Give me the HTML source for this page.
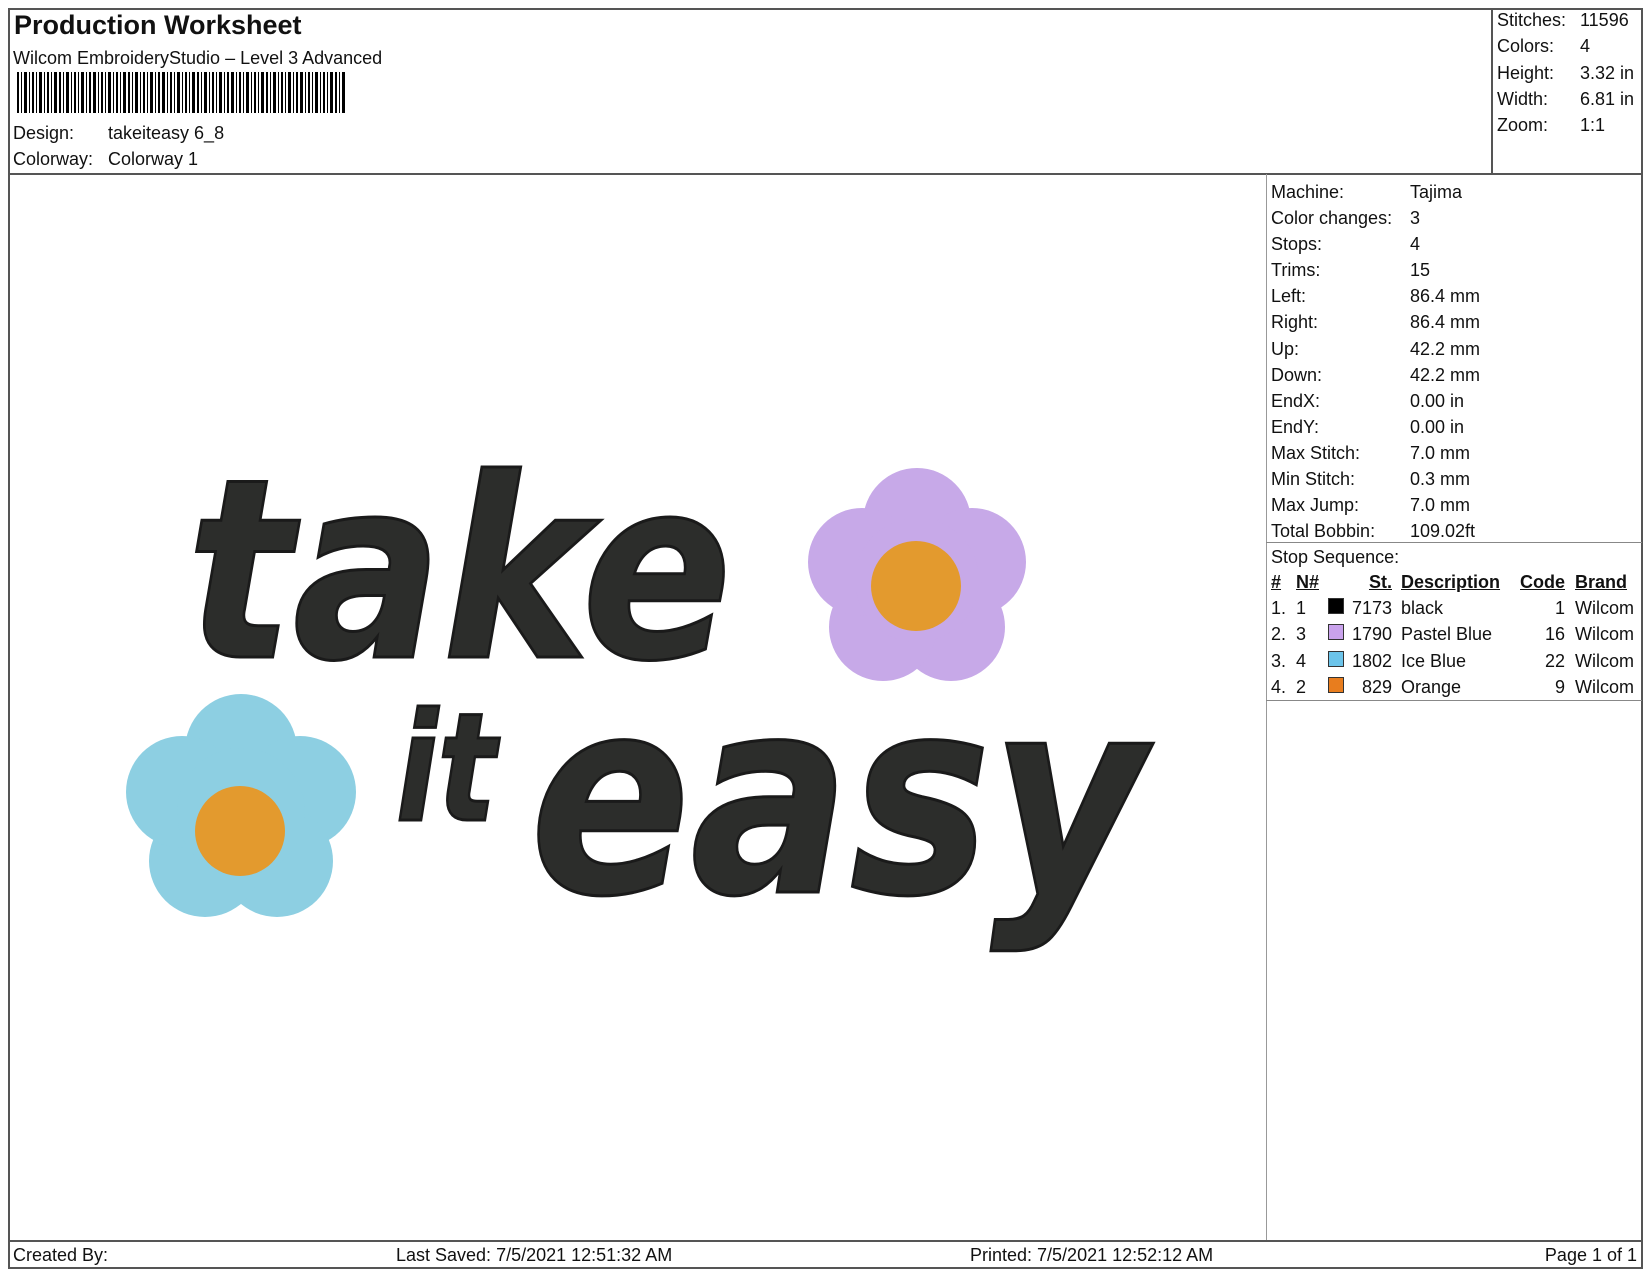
<!DOCTYPE html>
<html><head><meta charset="utf-8"><style>
*{margin:0;padding:0;box-sizing:border-box}
body{width:1650px;height:1270px;background:#fff;position:relative;overflow:hidden;font-family:"Liberation Sans",Arial,sans-serif;color:#111;font-size:18px}
.a{position:absolute;white-space:nowrap;line-height:1}
.ln{position:absolute;background:#555}
.sw{position:absolute;width:16px;height:16px;border:1px solid #333}
u{text-decoration:underline}
</style></head><body>
<div class="ln" style="left:8px;top:8px;width:1635px;height:2px"></div>
<div class="ln" style="left:8px;top:8px;width:2px;height:1261px"></div>
<div class="ln" style="left:1641px;top:8px;width:2px;height:1261px"></div>
<div class="ln" style="left:8px;top:1267px;width:1635px;height:2px"></div>
<div class="ln" style="left:8px;top:173px;width:1635px;height:2px"></div>
<div class="ln" style="left:1491px;top:8px;width:2px;height:166px"></div>
<div class="ln" style="left:1266px;top:174px;width:1px;height:1066px;background:#999"></div>
<div class="ln" style="left:8px;top:1240px;width:1635px;height:2px"></div>
<div class="ln" style="left:1266px;top:542px;width:376px;height:1px;background:#888"></div>
<div class="ln" style="left:1266px;top:700px;width:376px;height:1px;background:#888"></div>

<div class="a" style="left:14px;top:12px;font-size:27px;font-weight:bold">Production Worksheet</div>
<div class="a" style="left:13px;top:49px">Wilcom EmbroideryStudio – Level 3 Advanced</div>
<svg class="a" style="left:17px;top:72px" width="330" height="41">
<g fill="#000">
<rect x="0" y="0" width="2" height="41"/><rect x="4" y="0" width="1" height="41"/><rect x="7" y="0" width="3" height="41"/><rect x="12" y="0" width="1" height="41"/><rect x="15" y="0" width="2" height="41"/><rect x="19" y="0" width="1" height="41"/><rect x="22" y="0" width="3" height="41"/><rect x="27" y="0" width="1" height="41"/><rect x="30" y="0" width="2" height="41"/><rect x="34" y="0" width="1" height="41"/><rect x="37" y="0" width="3" height="41"/><rect x="42" y="0" width="2" height="41"/><rect x="46" y="0" width="1" height="41"/><rect x="49" y="0" width="3" height="41"/><rect x="54" y="0" width="1" height="41"/><rect x="57" y="0" width="2" height="41"/><rect x="61" y="0" width="1" height="41"/><rect x="64" y="0" width="3" height="41"/><rect x="69" y="0" width="1" height="41"/><rect x="72" y="0" width="2" height="41"/><rect x="76" y="0" width="3" height="41"/><rect x="81" y="0" width="1" height="41"/><rect x="84" y="0" width="2" height="41"/><rect x="88" y="0" width="1" height="41"/><rect x="91" y="0" width="3" height="41"/><rect x="96" y="0" width="1" height="41"/><rect x="99" y="0" width="2" height="41"/><rect x="103" y="0" width="1" height="41"/><rect x="106" y="0" width="3" height="41"/><rect x="111" y="0" width="2" height="41"/><rect x="115" y="0" width="1" height="41"/><rect x="118" y="0" width="3" height="41"/><rect x="123" y="0" width="1" height="41"/><rect x="126" y="0" width="2" height="41"/><rect x="130" y="0" width="1" height="41"/><rect x="133" y="0" width="3" height="41"/><rect x="138" y="0" width="1" height="41"/><rect x="141" y="0" width="2" height="41"/><rect x="145" y="0" width="3" height="41"/><rect x="150" y="0" width="1" height="41"/><rect x="153" y="0" width="2" height="41"/><rect x="157" y="0" width="1" height="41"/><rect x="160" y="0" width="3" height="41"/><rect x="165" y="0" width="1" height="41"/><rect x="168" y="0" width="2" height="41"/><rect x="172" y="0" width="1" height="41"/><rect x="175" y="0" width="3" height="41"/><rect x="180" y="0" width="2" height="41"/><rect x="184" y="0" width="1" height="41"/><rect x="187" y="0" width="3" height="41"/><rect x="192" y="0" width="1" height="41"/><rect x="195" y="0" width="2" height="41"/><rect x="199" y="0" width="1" height="41"/><rect x="202" y="0" width="3" height="41"/><rect x="207" y="0" width="1" height="41"/><rect x="210" y="0" width="2" height="41"/><rect x="214" y="0" width="3" height="41"/><rect x="219" y="0" width="1" height="41"/><rect x="222" y="0" width="2" height="41"/><rect x="226" y="0" width="1" height="41"/><rect x="229" y="0" width="3" height="41"/><rect x="234" y="0" width="1" height="41"/><rect x="237" y="0" width="2" height="41"/><rect x="241" y="0" width="1" height="41"/><rect x="244" y="0" width="3" height="41"/><rect x="249" y="0" width="2" height="41"/><rect x="253" y="0" width="1" height="41"/><rect x="256" y="0" width="3" height="41"/><rect x="261" y="0" width="1" height="41"/><rect x="264" y="0" width="2" height="41"/><rect x="268" y="0" width="1" height="41"/><rect x="271" y="0" width="3" height="41"/><rect x="276" y="0" width="1" height="41"/><rect x="279" y="0" width="2" height="41"/><rect x="283" y="0" width="3" height="41"/><rect x="288" y="0" width="1" height="41"/><rect x="291" y="0" width="2" height="41"/><rect x="295" y="0" width="1" height="41"/><rect x="298" y="0" width="3" height="41"/><rect x="303" y="0" width="1" height="41"/><rect x="306" y="0" width="2" height="41"/><rect x="310" y="0" width="1" height="41"/><rect x="313" y="0" width="3" height="41"/><rect x="318" y="0" width="2" height="41"/><rect x="322" y="0" width="1" height="41"/><rect x="325" y="0" width="3" height="41"/>
</g></svg>
<div class="a" style="left:13px;top:124px">Design:</div><div class="a" style="left:108px;top:124px">takeiteasy 6_8</div>
<div class="a" style="left:13px;top:150px">Colorway:</div><div class="a" style="left:108px;top:150px">Colorway 1</div>

<div class="a" style="left:1497px;top:11px">Stitches:</div><div class="a" style="left:1580px;top:11px">11596</div>
<div class="a" style="left:1497px;top:37px">Colors:</div><div class="a" style="left:1580px;top:37px">4</div>
<div class="a" style="left:1497px;top:64px">Height:</div><div class="a" style="left:1580px;top:64px">3.32 in</div>
<div class="a" style="left:1497px;top:90px">Width:</div><div class="a" style="left:1580px;top:90px">6.81 in</div>
<div class="a" style="left:1497px;top:116px">Zoom:</div><div class="a" style="left:1580px;top:116px">1:1</div>

<div style="position:absolute;left:1271px;top:179px;line-height:26.1px">
Machine:<br>Color changes:<br>Stops:<br>Trims:<br>Left:<br>Right:<br>Up:<br>Down:<br>EndX:<br>EndY:<br>Max Stitch:<br>Min Stitch:<br>Max Jump:<br>Total Bobbin:<br>Stop Sequence:</div>
<div style="position:absolute;left:1410px;top:179px;line-height:26.1px">
Tajima<br>3<br>4<br>15<br>86.4 mm<br>86.4 mm<br>42.2 mm<br>42.2 mm<br>0.00 in<br>0.00 in<br>7.0 mm<br>0.3 mm<br>7.0 mm<br>109.02ft</div>

<div class="a" style="left:1271px;top:573px;font-weight:bold"><u>#</u></div>
<div class="a" style="left:1296px;top:573px;font-weight:bold"><u>N#</u></div>
<div class="a" style="left:1362px;top:573px;font-weight:bold;width:30px;text-align:right"><u>St.</u></div>
<div class="a" style="left:1401px;top:573px;font-weight:bold"><u>Description</u></div>
<div class="a" style="left:1515px;top:573px;font-weight:bold;width:50px;text-align:right"><u>Code</u></div>
<div class="a" style="left:1575px;top:573px;font-weight:bold"><u>Brand</u></div>

<div style="position:absolute;left:1271px;top:595px;line-height:26.3px">1.<br>2.<br>3.<br>4.</div>
<div style="position:absolute;left:1296px;top:595px;line-height:26.3px">1<br>3<br>4<br>2</div>
<div class="sw" style="left:1328px;top:598px;background:#000"></div>
<div class="sw" style="left:1328px;top:624px;background:#c9a2ec"></div>
<div class="sw" style="left:1328px;top:651px;background:#6cc4ea"></div>
<div class="sw" style="left:1328px;top:677px;background:#e87d1e"></div>
<div style="position:absolute;left:1340px;width:52px;text-align:right;top:595px;line-height:26.3px">7173<br>1790<br>1802<br>829</div>
<div style="position:absolute;left:1401px;top:595px;line-height:26.3px">black<br>Pastel Blue<br>Ice Blue<br>Orange</div>
<div style="position:absolute;left:1515px;width:50px;text-align:right;top:595px;line-height:26.3px">1<br>16<br>22<br>9</div>
<div style="position:absolute;left:1575px;top:595px;line-height:26.3px">Wilcom<br>Wilcom<br>Wilcom<br>Wilcom</div>

<div class="a" style="left:13px;top:1246px">Created By:</div>
<div class="a" style="left:396px;top:1246px">Last Saved: 7/5/2021 12:51:32 AM</div>
<div class="a" style="left:970px;top:1246px">Printed: 7/5/2021 12:52:12 AM</div>
<div class="a" style="right:13px;top:1246px">Page 1 of 1</div>

<svg class="a" style="left:0;top:0" width="1260" height="1240">
<g fill="#c7a9e8">
<circle cx="917" cy="522" r="54"/><circle cx="972" cy="562" r="54"/><circle cx="951" cy="627" r="54"/><circle cx="883" cy="627" r="54"/><circle cx="862" cy="562" r="54"/>
<circle cx="917" cy="580" r="62"/>
</g>
<circle cx="916" cy="586" r="45" fill="#e39a2e"/>
<g fill="#8dcfe2">
<circle cx="241" cy="750" r="56"/><circle cx="300" cy="792" r="56"/><circle cx="277" cy="861" r="56"/><circle cx="205" cy="861" r="56"/><circle cx="182" cy="792" r="56"/>
<circle cx="241" cy="812" r="64"/>
</g>
<circle cx="240" cy="831" r="45" fill="#e39a2e"/>
<g fill="#2c2d2b" stroke="#1a1a1a" stroke-width="3" font-family="'DejaVu Sans',sans-serif" font-weight="bold" font-style="italic">
<text x="187" y="657" font-size="250" textLength="545" lengthAdjust="spacingAndGlyphs">take</text>
<text x="396" y="820" font-size="150" textLength="100" lengthAdjust="spacingAndGlyphs">it</text>
<text x="530" y="892" font-size="272" textLength="615" lengthAdjust="spacingAndGlyphs">easy</text>
</g>
</svg>
</body></html>
